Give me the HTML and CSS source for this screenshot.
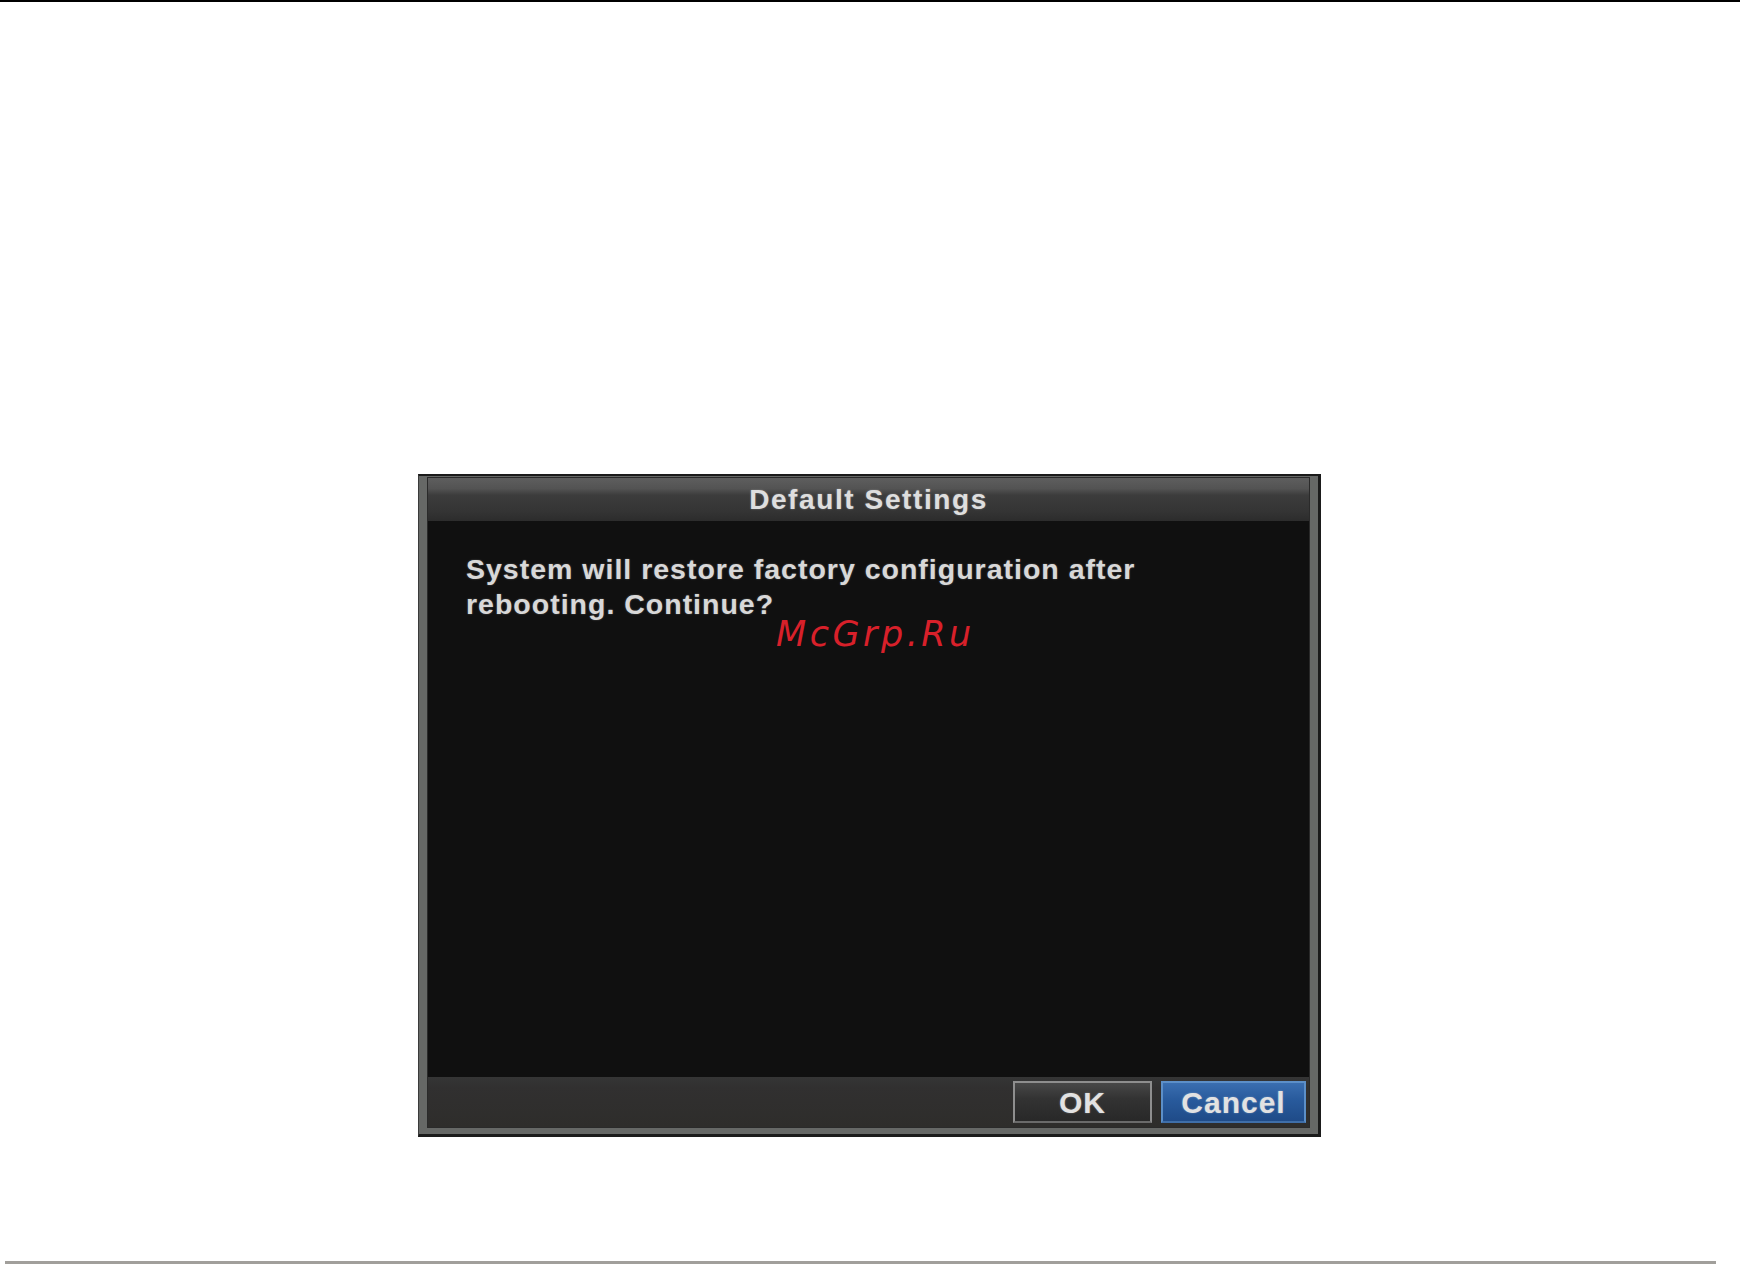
FILE: index.html
```html
<!DOCTYPE html>
<html>
<head>
<meta charset="utf-8">
<link rel="stylesheet" href="styles.css">
</head>
<body>
<div class="page">
  <div class="top-rule"></div>
  <div class="stage">
    <div class="dialog">
      <div class="panel">
        <div class="titlebar">Default Settings</div>
        <div class="content">
          <p class="message">System will restore factory configuration after<br>rebooting. Continue?</p>
        </div>
        <div class="footer">
          <button class="btn btn-ok">OK</button>
          <button class="btn btn-cancel">Cancel</button>
        </div>
      </div>
      <span class="watermark">McGrp.Ru</span>
    </div>
  </div>
  <div class="bottom-rule"></div>
</div>
</body>
</html>
```
FILE: styles.css
```css
html, body {
  margin: 0;
  padding: 0;
  background: #ffffff;
}
.page {
  width: 1740px;
  height: 1266px;
  display: flex;
  flex-direction: column;
  overflow: hidden;
}
.top-rule {
  height: 2px;
  background: #000000;
  width: 100%;
}
.stage {
  padding-left: 418px;
  margin-top: 472px;
}
.dialog {
  position: relative;
  width: 903px;
  height: 663px;
  box-sizing: border-box;
  border-top: 2px solid #1a1a1a;
  border-right: 3px solid #1b1b1b;
  border-bottom: 3px solid #1b1b1b;
  border-left: 1px solid #3a3a3a;
  background: #666866;
  padding: 1px 8px 6px 8px;
  font-family: "Liberation Sans", Arial, sans-serif;
}
.panel {
  height: 100%;
  box-sizing: border-box;
  border: 1px solid #2a2a2a;
  display: flex;
  flex-direction: column;
  background: #111111;
}
.titlebar {
  height: 43px;
  flex: none;
  background: linear-gradient(to bottom, #5e5e5e 0%, #535353 25%, #3c3c3c 40%, #353535 75%, #2c2c2c 100%);
  color: #dedede;
  font-weight: bold;
  font-size: 28px;
  letter-spacing: 1.6px;
  text-align: center;
  line-height: 43px;
  text-shadow: 0 0 2px rgba(255,255,255,0.35);
}
.content {
  flex: 1;
  background: #101010;
  padding: 31px 0 0 38px;
}
.message {
  margin: 0;
  color: #d8d8d8;
  font-weight: bold;
  font-size: 28.5px;
  letter-spacing: 1px;
  line-height: 35px;
  text-shadow: 0 0 2px rgba(255,255,255,0.3);
}
.footer {
  height: 50px;
  flex: none;
  background: linear-gradient(to bottom, #353535 0%, #313030 20%, #2e2d2b 100%);
  display: flex;
  align-items: center;
  justify-content: flex-end;
  gap: 9px;
  padding-right: 3px;
}
.btn {
  height: 42px;
  box-sizing: border-box;
  margin: 0;
  padding: 0;
  font-family: "Liberation Sans", Arial, sans-serif;
  font-weight: bold;
  font-size: 30px;
  letter-spacing: 1px;
  line-height: 40px;
  color: #e2e2e2;
  text-shadow: 0 0 2px rgba(255,255,255,0.35);
}
.btn-ok {
  width: 139px;
  border: 2px solid #8e8e8e;
  border-bottom-color: #6a6a6a;
  background: linear-gradient(to bottom, #484848 0%, #333333 40%, #282828 100%);
}
.btn-cancel {
  width: 145px;
  border: 2px solid #5c8fc8;
  border-bottom-color: #3f6ea8;
  background: linear-gradient(to bottom, #3a6eb0 0%, #285a9c 45%, #1f4b88 100%);
}
.watermark {
  position: absolute;
  left: 357px;
  top: 141px;
  font-family: "DejaVu Sans", sans-serif;
  font-style: oblique;
  font-size: 35px;
  line-height: 1;
  letter-spacing: 3.5px;
  color: #d8202a;
  white-space: nowrap;
}
.bottom-rule {
  margin-top: 124px;
  margin-left: 5px;
  width: 1711px;
  height: 3px;
  background: #a19f9b;
}
```
